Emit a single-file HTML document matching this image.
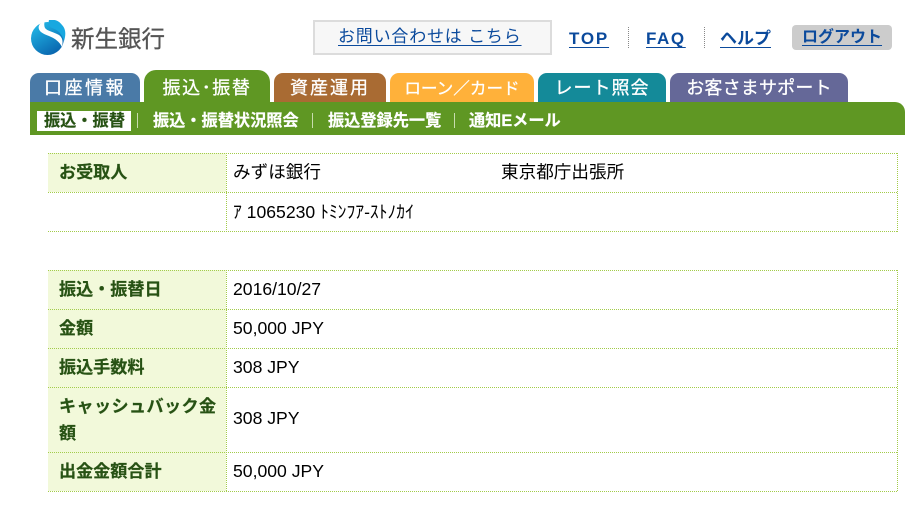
<!DOCTYPE html>
<html lang="ja">
<head>
<meta charset="utf-8">
<style>
html,body{margin:0;padding:0;background:#fff;}
body{width:919px;height:513px;position:relative;overflow:hidden;font-family:"Liberation Sans","Noto Sans CJK JP",sans-serif;color:#000;}
.a{position:absolute;white-space:nowrap;}
.lnk{color:#0b4a9c;text-decoration:underline;text-underline-offset:3px;font-size:17px;line-height:24px;}
.b{font-weight:bold;}
.tab{position:absolute;top:73px;height:29px;border-radius:9px 9px 0 0;color:#fff;font-size:18px;line-height:31px;text-align:center;white-space:nowrap;-webkit-text-stroke:.3px #fff;}
.sub{position:absolute;top:110px;font-size:16.2px;line-height:22px;font-weight:bold;color:#fff;white-space:nowrap;-webkit-text-stroke:.2px currentColor;}
.sep{position:absolute;top:113px;width:1px;height:15px;background:#c8dcae;}
.hl{position:absolute;left:48px;width:850px;height:1px;background:repeating-linear-gradient(90deg,#a3cc4a 0 1px,transparent 1px 2px);}
.vl{position:absolute;width:1px;background:repeating-linear-gradient(180deg,#a3cc4a 0 1px,transparent 1px 2px);}
.th{position:absolute;left:48px;width:178px;background:#f2f9da;}
.tt{position:absolute;left:59px;font-size:17.1px;font-weight:bold;color:#275214;line-height:29px;white-space:nowrap;-webkit-text-stroke:.2px #275214;}
.td{position:absolute;left:233px;font-size:17.6px;line-height:24px;white-space:nowrap;}
</style>
</head>
<body>
<svg class="a" style="left:30px;top:20px" width="36" height="36" viewBox="0 0 36 36">
<defs><linearGradient id="g" x1="0" y1="0" x2="0.6" y2="1"><stop offset="0" stop-color="#25c0ec"/><stop offset="1" stop-color="#0a68b0"/></linearGradient></defs>
<circle cx="17.5" cy="18.5" r="16.5" fill="url(#g)"/>
<path d="M19 0C25 -1 29 1 32 5C36 9 36 15 34 21C32 14 28 10 22 8C19 7 18 3 19 0Z" fill="#18a8e0"/>
<path d="M15 1C9 3 7 7 10 11C14 16 27 16 32 27C33 22 33 18 29 15C24 12 17 11 15 8C14 6 14 3 15 1Z" fill="#fff"/>
</svg>
<div class="a" style="left:71px;top:25px;font-size:23.5px;line-height:28px;color:#555;-webkit-text-stroke:.3px #555;">新生銀行</div>

<div class="a" style="left:313px;top:20px;width:235px;height:31px;background:#f7f7f7;border:2px solid #dcdcdc;"></div>
<div class="a lnk" style="left:338px;top:25px;letter-spacing:.8px;">お問い合わせは こちら</div>

<div class="a lnk b" style="left:569px;top:27px;letter-spacing:1.8px;">TOP</div>
<div class="a" style="left:628px;top:27px;width:1px;height:21px;background:repeating-linear-gradient(180deg,#888 0 1px,transparent 1px 2px);"></div>
<div class="a lnk b" style="left:646px;top:27px;letter-spacing:1.6px;">FAQ</div>
<div class="a" style="left:704px;top:27px;width:1px;height:21px;background:repeating-linear-gradient(180deg,#888 0 1px,transparent 1px 2px);"></div>
<div class="a lnk b" style="left:720px;top:27px;">ヘルプ</div>
<div class="a" style="left:792px;top:25px;width:100px;height:25px;background:#ccc;border-radius:4px;"></div>
<div class="a lnk b" style="left:802px;top:26px;font-size:16px;">ログアウト</div>

<div class="tab" style="left:30px;width:110px;background:#4a7aa7;letter-spacing:2.5px;">口座情報</div>
<div class="tab" style="left:144px;width:126px;top:70px;height:32px;border-radius:12px 12px 0 0;background:#5f9723;line-height:37px;letter-spacing:1.6px;">振込･振替</div>
<div class="tab" style="left:274px;width:112px;background:#a96b33;letter-spacing:2px;">資産運用</div>
<div class="tab" style="left:390px;width:144px;background:#ffb13a;font-size:16.6px;">ローン／カード</div>
<div class="tab" style="left:538px;width:128px;background:#148a99;letter-spacing:1px;">レート照会</div>
<div class="tab" style="left:670px;width:178px;background:#656898;letter-spacing:.2px;">お客さまサポート</div>

<div class="a" style="left:30px;top:102px;width:875px;height:33px;background:#5f9723;border-radius:0 10px 0 0;"></div>
<div class="a" style="left:37px;top:111px;width:94px;height:20px;background:#fff;"></div>
<div class="sub" style="left:44px;color:#275214;">振込・振替</div>
<div class="sep" style="left:137px;"></div>
<div class="sub" style="left:153px;">振込・振替状況照会</div>
<div class="sep" style="left:312px;"></div>
<div class="sub" style="left:328px;">振込登録先一覧</div>
<div class="sep" style="left:454px;"></div>
<div class="sub" style="left:469px;">通知Eメール</div>

<div class="th" style="top:153px;height:39px;"></div>
<div class="hl" style="top:153px;"></div>
<div class="hl" style="top:192px;"></div>
<div class="hl" style="top:231px;"></div>
<div class="vl" style="left:226px;top:153px;height:79px;"></div>
<div class="vl" style="left:897px;top:153px;height:79px;"></div>
<div class="tt" style="top:158px;">お受取人</div>
<div class="td" style="top:160px;">みずほ銀行</div>
<div class="td" style="left:501px;top:160px;">東京都庁出張所</div>
<div class="td" style="top:200px;">ｱ 1065230 <span>ﾄﾐﾝﾌｱ-ｽﾄﾉｶｲ</span></div>

<div class="th" style="top:270px;height:221px;"></div>
<div class="hl" style="top:270px;"></div>
<div class="hl" style="top:309px;"></div>
<div class="hl" style="top:348px;"></div>
<div class="hl" style="top:387px;"></div>
<div class="hl" style="top:452px;"></div>
<div class="hl" style="top:491px;"></div>
<div class="vl" style="left:226px;top:270px;height:222px;"></div>
<div class="vl" style="left:897px;top:270px;height:222px;"></div>
<div class="tt" style="top:275px;">振込・振替日</div>
<div class="tt" style="top:314px;">金額</div>
<div class="tt" style="top:353px;">振込手数料</div>
<div class="tt" style="top:392px;letter-spacing:.4px;">キャッシュバック金</div>
<div class="tt" style="top:419px;">額</div>
<div class="tt" style="top:457px;">出金金額合計</div>
<div class="td" style="top:277px;">2016/10/27</div>
<div class="td" style="top:316px;">50,000 JPY</div>
<div class="td" style="top:355px;">308 JPY</div>
<div class="td" style="top:406px;">308 JPY</div>
<div class="td" style="top:459px;">50,000 JPY</div>
</body>
</html>
